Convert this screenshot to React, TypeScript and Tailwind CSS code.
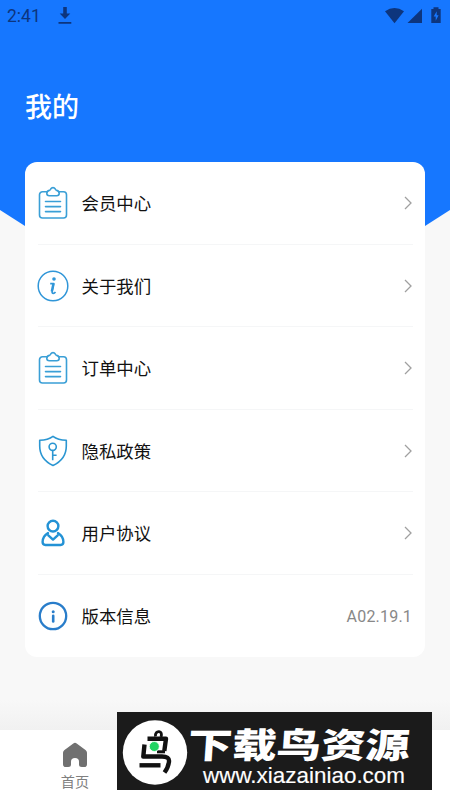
import type { ReactNode } from "react";

const ClipboardIcon = () => (
  <svg className="shrink-0" width="30" height="34" viewBox="0 0 30 34" fill="none" stroke="#3a9fd6" strokeWidth="1.6" strokeLinecap="round" strokeLinejoin="round">
    <path d="M9.5 5.8H4.5A3 3 0 0 0 1.5 8.8V29A3 3 0 0 0 4.5 32H25.5A3 3 0 0 0 28.5 29V8.8A3 3 0 0 0 25.5 5.8H20.5" />
    <path d="M11.3 9.7C9.6 9.7 8.8 8.9 8.8 7.5C8.8 5.8 9.6 4.8 11.3 4.4C12.4 4.1 12.4 3.6 12.8 2.8C13.7 1.2 16.3 1.2 17.2 2.8C17.6 3.6 17.6 4.1 18.7 4.4C20.4 4.8 21.2 5.8 21.2 7.5C21.2 8.9 20.4 9.7 18.7 9.7Z" />
    <path d="M7.5 15.5H22.5M7.5 20.6H22.5M7.5 25.6H22.5" />
  </svg>
);

const AboutIcon = () => (
  <svg className="shrink-0" width="32" height="32" viewBox="0 0 32 32" fill="none" stroke="#3096d8">
    <circle cx="16" cy="16" r="14.8" strokeWidth="1.5" />
    <circle cx="17" cy="9" r="1.8" fill="#3096d8" stroke="none" />
    <path d="M13.2 13.7H16.9L15.2 21.5Q14.8 23.4 16.3 23.4Q17.5 23.3 18.5 22" strokeWidth="1.7" strokeLinejoin="round" />
    <path d="M16.3 14L14.7 21.5" strokeWidth="2.2" />
  </svg>
);

const ShieldIcon = () => (
  <svg className="shrink-0" width="30" height="32" viewBox="0 0 30 32" fill="none" stroke="#2b96d2" strokeWidth="1.6" strokeLinejoin="round">
    <path d="M15 1.3C11.5 4 6.5 5.2 1.7 5.3V11C1.7 19.5 6.5 26.5 15 30.5C23.5 26.5 28.3 19.5 28.3 11V5.3C23.5 5.2 18.5 4 15 1.3Z" />
    <circle cx="14.7" cy="11.8" r="3.6" />
    <path d="M14.7 15.4V25.3M14.7 20.2H18.6" />
  </svg>
);

const UserIcon = () => (
  <svg className="shrink-0" width="24" height="28" viewBox="0 0 24 28" fill="none" stroke="#2392d5" strokeWidth="2.4" strokeLinecap="round" strokeLinejoin="round">
    <circle cx="12" cy="7.1" r="5.4" />
    <path d="M7 14.1C3.3 16.2 1.6 19.8 1.6 23.1C1.6 25.1 2.5 26 4.4 26H19.6C21.5 26 22.4 25.1 22.4 23.1C22.4 19.8 20.7 16.2 17 14.1" />
    <path d="M7.3 16.3L12 20.6L16.7 16.3" />
  </svg>
);

const VersionIcon = () => (
  <svg className="shrink-0" width="30" height="30" viewBox="0 0 30 30" fill="none" stroke="#297dca">
    <circle cx="15" cy="15" r="13.2" strokeWidth="2.3" />
    <circle cx="15.2" cy="10.7" r="1.5" fill="#297dca" stroke="none" />
    <path d="M15.2 14.8V20.5" strokeWidth="2.6" strokeLinecap="round" />
  </svg>
);

const Chevron = () => (
  <svg className="mr-px" width="8" height="14" viewBox="0 0 8 14" fill="none" stroke="#a0a0a0" strokeWidth="1.3">
    <path d="M1 1L7 7L1 13" />
  </svg>
);

const StatusBar = () => (
  <div className="flex h-8 items-center justify-between pl-[7px] pr-2 text-[#0d357d]">
    <div className="flex items-center gap-[17px]">
      <span className="font-['Roboto',sans-serif] text-[17.5px] leading-8">2:41</span>
      <svg width="14" height="18" viewBox="0 0 14 18" fill="currentColor">
        <path d="M5.2 0H8.8V6.5H12.3L7 12L1.7 6.5H5.2ZM.5 15H13.3V16.8H.5Z" />
      </svg>
    </div>
    <svg width="58" height="18" viewBox="0 0 58 18" fill="currentColor">
      <path d="M1 4.2Q10.5-2.2 20 4.2L10.5 16.2Z" />
      <path d="M38 1.8V16H23.5Z" />
      <path d="M49.5 0.3H54.5V2H56.7V16H47.3V2H49.5Z" />
      <path d="M52.7 4.2L49.7 9.5H51.7V13.8L54.6 8.3H52.7Z" fill="#1677ff" />
    </svg>
  </div>
);

type Item = { label: string; icon: ReactNode; value?: string };

const items: Item[] = [
  { label: "会员中心", icon: <ClipboardIcon /> },
  { label: "关于我们", icon: <AboutIcon /> },
  { label: "订单中心", icon: <ClipboardIcon /> },
  { label: "隐私政策", icon: <ShieldIcon /> },
  { label: "用户协议", icon: <UserIcon /> },
  { label: "版本信息", icon: <VersionIcon />, value: "A02.19.1" },
];

const MenuRow = ({ label, icon, value }: Item) => (
  <li className="flex h-[82.5px] items-center border-b border-[#f5f6f7] last:border-b-0">
    <span className="flex w-[30px] shrink-0 items-center justify-center">{icon}</span>
    <span className="ml-[13.5px] grow text-[17.4px] text-[#111]">{label}</span>
    {value ? (
      <span className="mr-px mt-0.5 font-['Roboto',sans-serif] text-[16px] tracking-[0.2px] text-[#888]">{value}</span>
    ) : (
      <Chevron />
    )}
  </li>
);

const SiteBanner = () => (
  <div className="absolute left-[117px] top-[712px] h-[78px] w-[315px] bg-[#1b1b1b]">
    <svg width="315" height="78" viewBox="0 0 315 78">
      <circle cx="38" cy="40.5" r="32.2" fill="#fff" />
      <g fill="none" stroke="#111" strokeWidth="4.4" strokeLinejoin="round">
        <path d="M38.5 24.5C38 21 40 19.5 42 19.7C44.3 20 45 22 44 25" strokeWidth="2.8" />
        <path d="M30.5 26.7H49L47.3 39" />
        <path d="M27.5 32.5L26.3 44.5H45Q52.5 44.5 52 49.5Q51.3 55.5 47.5 60.5" />
        <path d="M40 39.8H48" strokeWidth="3" />
        <path d="M22.5 53.3H43.5" />
      </g>
      <circle cx="37.3" cy="34.5" r="5" fill="#20d463" stroke="#fff" strokeWidth=".8" />
      <text
        transform="translate(70 46.2) skewX(-4) scale(1 .85)"
        textLength="222"
        lengthAdjust="spacingAndGlyphs"
        fill="#fff"
        className="font-['Noto_Sans_CJK_SC',sans-serif] text-[41px] font-black"
      >
        下载鸟资源
      </text>
      <text
        x="86"
        y="71"
        textLength="202"
        lengthAdjust="spacingAndGlyphs"
        fill="#fff"
        stroke="#fff"
        strokeWidth=".15"
        className="font-['Liberation_Sans',sans-serif] text-[22.5px]"
      >
        www.xiazainiao.com
      </text>
    </svg>
  </div>
);

const App = () => {
  return (
    <div className="relative flex h-[800px] w-[450px] flex-col overflow-hidden bg-[#f8f8f8] font-['Noto_Sans_CJK_SC',sans-serif]">
      <header className="h-[354px] shrink-0 bg-[#1677ff] [clip-path:polygon(0_0,100%_0,100%_210px,50%_100%,0_210px)]">
        <StatusBar />
        <h1 className="ml-[25px] mt-[54px] text-[27px] font-medium leading-10 text-white">我的</h1>
      </header>

      <main className="relative mx-[25px] -mt-[191.6px] shrink-0 rounded-xl bg-white pl-[13px] pr-3">
        <ul>
          {items.map((item) => (
            <MenuRow key={item.label} {...item} />
          ))}
        </ul>
      </main>

      <div className="mt-auto h-[30px] shrink-0 bg-linear-to-b from-[#f8f8f8] to-[#f1f1f1]" />
      <nav className="flex h-[70px] shrink-0 bg-white">
        <a className="flex w-[150px] flex-col items-center pt-3 text-[#707070]">
          <svg width="26" height="26" viewBox="0 0 26 26" fill="currentColor">
            <path d="M11.3 1.5Q13 .2 14.7 1.5L23.8 8.3Q25 9.3 25 10.8V22.2Q25 25 22.2 25H19.8Q17 25 17 22.5V19.7Q17 16 13 16Q9 16 9 19.7V22.5Q9 25 6.2 25H3.8Q1 25 1 22.2V10.8Q1 9.3 2.2 8.3Z" />
          </svg>
          <span className="mt-[3px] text-[14.2px] leading-5 text-[#808080]">首页</span>
        </a>
      </nav>

      <SiteBanner />
    </div>
  );
};

export default App;
